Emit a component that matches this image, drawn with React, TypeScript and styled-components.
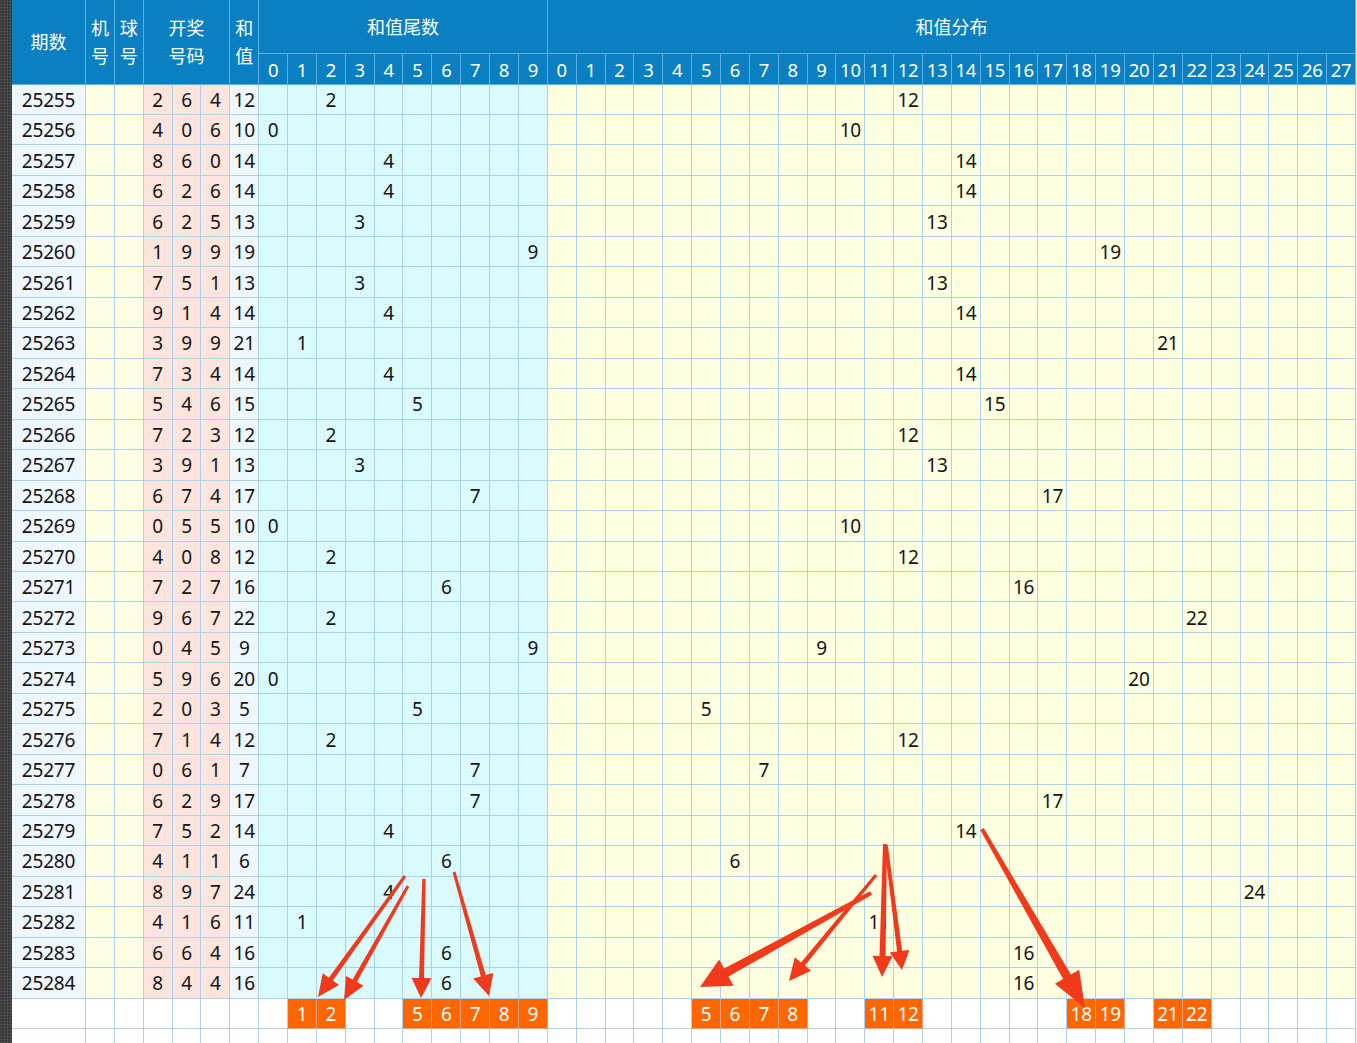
import React from 'react';
import styled, { createGlobalStyle } from 'styled-components';

type Draw = { period: number; nums: [number, number, number] };

const draws: Draw[] = [
  { period: 25255, nums: [2, 6, 4] },
  { period: 25256, nums: [4, 0, 6] },
  { period: 25257, nums: [8, 6, 0] },
  { period: 25258, nums: [6, 2, 6] },
  { period: 25259, nums: [6, 2, 5] },
  { period: 25260, nums: [1, 9, 9] },
  { period: 25261, nums: [7, 5, 1] },
  { period: 25262, nums: [9, 1, 4] },
  { period: 25263, nums: [3, 9, 9] },
  { period: 25264, nums: [7, 3, 4] },
  { period: 25265, nums: [5, 4, 6] },
  { period: 25266, nums: [7, 2, 3] },
  { period: 25267, nums: [3, 9, 1] },
  { period: 25268, nums: [6, 7, 4] },
  { period: 25269, nums: [0, 5, 5] },
  { period: 25270, nums: [4, 0, 8] },
  { period: 25271, nums: [7, 2, 7] },
  { period: 25272, nums: [9, 6, 7] },
  { period: 25273, nums: [0, 4, 5] },
  { period: 25274, nums: [5, 9, 6] },
  { period: 25275, nums: [2, 0, 3] },
  { period: 25276, nums: [7, 1, 4] },
  { period: 25277, nums: [0, 6, 1] },
  { period: 25278, nums: [6, 2, 9] },
  { period: 25279, nums: [7, 5, 2] },
  { period: 25280, nums: [4, 1, 1] },
  { period: 25281, nums: [8, 9, 7] },
  { period: 25282, nums: [4, 1, 6] },
  { period: 25283, nums: [6, 6, 4] },
  { period: 25284, nums: [8, 4, 4] },
];

const tailHits = [1, 2, 5, 6, 7, 8, 9];
const distHits = [5, 6, 7, 8, 11, 12, 18, 19, 21, 22];

const tails = Array.from({ length: 10 }, (_, i) => i);
const sums = Array.from({ length: 28 }, (_, i) => i);

type Tone = 'period' | 'machine' | 'draw' | 'sum' | 'tail' | 'dist' | 'blank' | 'hit';

const toneBg: Record<Tone, string> = {
  period: '#eef6fe',
  machine: '#fefee2',
  draw: '#fde4dd',
  sum: '#eef6fe',
  tail: '#d9fbfe',
  dist: '#fefee1',
  blank: '#ffffff',
  hit: '#ff6600',
};

const GlobalStyle = createGlobalStyle`
  html, body { margin: 0; padding: 0; background: #ffffff; }
  body { font-family: "Noto Sans", "Noto Sans CJK SC", sans-serif; }
`;

const Page = styled.div`
  position: relative;
  display: flex;
  width: 1357px;
  height: 1043px;
  overflow: hidden;
  background: #f2eeee;
`;

const SideStrip = styled.div`
  flex: 0 0 12px;
  background-color: #3a3a3a;
  background-image: radial-gradient(#575757 0.8px, transparent 1.1px);
  background-size: 3px 3px;
`;

const Sheet = styled.div`
  flex: 0 0 1344px;
  display: grid;
  grid-template-columns: 74px repeat(44, 1fr);
  grid-template-rows: 54px 30.5px;
  grid-auto-rows: 30.47px;
  align-content: start;
  font-family: "Noto Sans", "Noto Sans CJK SC", sans-serif;
`;

const HeadCell = styled.div<{ $span?: number; $rows?: number }>`
  grid-column: span ${(p) => p.$span ?? 1};
  grid-row: span ${(p) => p.$rows ?? 1};
  box-sizing: border-box;
  display: flex;
  flex-direction: column;
  align-items: center;
  justify-content: center;
  background: #0a7fc1;
  color: #ffffff;
  border-right: 1px solid #5eb1e7;
  border-bottom: 1px solid #5eb1e7;
  font-size: 18px;
  line-height: 28px;
  white-space: nowrap;
`;

const HeadNum = styled(HeadCell)`
  font-size: 18.5px;
  letter-spacing: -0.3px;
  padding-top: 2px;
`;

const Cell = styled.div<{ $tone: Tone }>`
  box-sizing: border-box;
  display: flex;
  align-items: center;
  justify-content: center;
  padding-top: 1px;
  background: ${(p) => toneBg[p.$tone]};
  color: ${(p) => (p.$tone === 'hit' ? '#ffffff' : '#151515')};
  border-right: 1px solid ${(p) => (p.$tone === 'hit' ? '#e9a27a' : '#aad2ef')};
  border-bottom: 1px solid ${(p) => (p.$tone === 'hit' ? '#e9a27a' : '#aad2ef')};
  font-size: 19px;
  letter-spacing: -0.2px;
  white-space: nowrap;
`;

const Overlay = styled.svg`
  position: absolute;
  left: 0;
  top: 0;
  width: 1357px;
  height: 1043px;
  pointer-events: none;
`;

type ArrowSpec = {
  x1: number; y1: number; x2: number; y2: number;
  w1: number; w2: number; hl: number; hw: number;
};

const arrows: ArrowSpec[] = [
  { x1: 405, y1: 876, x2: 318, y2: 997, w1: 3, w2: 5, hl: 22, hw: 20 },
  { x1: 408, y1: 886, x2: 344, y2: 1000, w1: 3, w2: 5, hl: 22, hw: 20 },
  { x1: 424, y1: 879, x2: 421, y2: 998, w1: 3.5, w2: 5, hl: 20, hw: 20 },
  { x1: 454, y1: 872, x2: 489, y2: 996, w1: 3, w2: 5, hl: 21, hw: 21 },
  { x1: 871, y1: 893, x2: 700, y2: 987, w1: 4, w2: 9, hl: 30, hw: 30 },
  { x1: 876, y1: 875, x2: 789, y2: 981, w1: 3, w2: 5, hl: 22, hw: 21 },
  { x1: 885, y1: 844, x2: 882, y2: 977, w1: 4, w2: 6, hl: 21, hw: 20 },
  { x1: 886, y1: 845, x2: 902, y2: 970, w1: 3.5, w2: 5, hl: 19, hw: 20 },
  { x1: 982, y1: 829, x2: 1085, y2: 1008, w1: 4, w2: 9, hl: 36, hw: 28 },
];

function arrowPoints(a: ArrowSpec): string {
  const dx = a.x2 - a.x1;
  const dy = a.y2 - a.y1;
  const len = Math.hypot(dx, dy);
  const ux = dx / len;
  const uy = dy / len;
  const nx = -uy;
  const ny = ux;
  const bx = a.x2 - ux * a.hl;
  const by = a.y2 - uy * a.hl;
  const pts: [number, number][] = [
    [a.x1 + (nx * a.w1) / 2, a.y1 + (ny * a.w1) / 2],
    [bx + (nx * a.w2) / 2, by + (ny * a.w2) / 2],
    [bx + (nx * a.hw) / 2, by + (ny * a.hw) / 2],
    [a.x2, a.y2],
    [bx - (nx * a.hw) / 2, by - (ny * a.hw) / 2],
    [bx - (nx * a.w2) / 2, by - (ny * a.w2) / 2],
    [a.x1 - (nx * a.w1) / 2, a.y1 - (ny * a.w1) / 2],
  ];
  return pts.map((p) => `${p[0].toFixed(1)},${p[1].toFixed(1)}`).join(' ');
}

function DataRow({ d }: { d: Draw }) {
  const sum = d.nums[0] + d.nums[1] + d.nums[2];
  const tail = sum % 10;
  return (
    <>
      <Cell $tone="period">{d.period}</Cell>
      <Cell $tone="machine" />
      <Cell $tone="machine" />
      {d.nums.map((n, i) => (
        <Cell key={i} $tone="draw">{n}</Cell>
      ))}
      <Cell $tone="sum">{sum}</Cell>
      {tails.map((t) => (
        <Cell key={`t${t}`} $tone="tail">{t === tail ? t : ''}</Cell>
      ))}
      {sums.map((s) => (
        <Cell key={`s${s}`} $tone="dist">{s === sum ? s : ''}</Cell>
      ))}
    </>
  );
}

function SummaryRow({ showHits }: { showHits: boolean }) {
  return (
    <>
      {Array.from({ length: 7 }, (_, i) => (
        <Cell key={`b${i}`} $tone="blank" />
      ))}
      {tails.map((t) => {
        const hit = showHits && tailHits.includes(t);
        return (
          <Cell key={`t${t}`} $tone={hit ? 'hit' : 'blank'}>{hit ? t : ''}</Cell>
        );
      })}
      {sums.map((s) => {
        const hit = showHits && distHits.includes(s);
        return (
          <Cell key={`s${s}`} $tone={hit ? 'hit' : 'blank'}>{hit ? s : ''}</Cell>
        );
      })}
    </>
  );
}

export default function App() {
  return (
    <Page>
      <GlobalStyle />
      <SideStrip />
      <Sheet>
        <HeadCell $rows={2}>期数</HeadCell>
        <HeadCell $rows={2}>
          <span>机</span>
          <span>号</span>
        </HeadCell>
        <HeadCell $rows={2}>
          <span>球</span>
          <span>号</span>
        </HeadCell>
        <HeadCell $rows={2} $span={3}>
          <span>开奖</span>
          <span>号码</span>
        </HeadCell>
        <HeadCell $rows={2}>
          <span>和</span>
          <span>值</span>
        </HeadCell>
        <HeadCell $span={10}>和值尾数</HeadCell>
        <HeadCell $span={28}>和值分布</HeadCell>
        {tails.map((t) => (
          <HeadNum key={`ht${t}`}>{t}</HeadNum>
        ))}
        {sums.map((s) => (
          <HeadNum key={`hs${s}`}>{s}</HeadNum>
        ))}
        {draws.map((d) => (
          <DataRow key={d.period} d={d} />
        ))}
        <SummaryRow showHits />
        <SummaryRow showHits={false} />
      </Sheet>
      <Overlay viewBox="0 0 1357 1043">
        {arrows.map((a, i) => (
          <polygon key={i} points={arrowPoints(a)} fill="#f1391c" />
        ))}
      </Overlay>
    </Page>
  );
}
